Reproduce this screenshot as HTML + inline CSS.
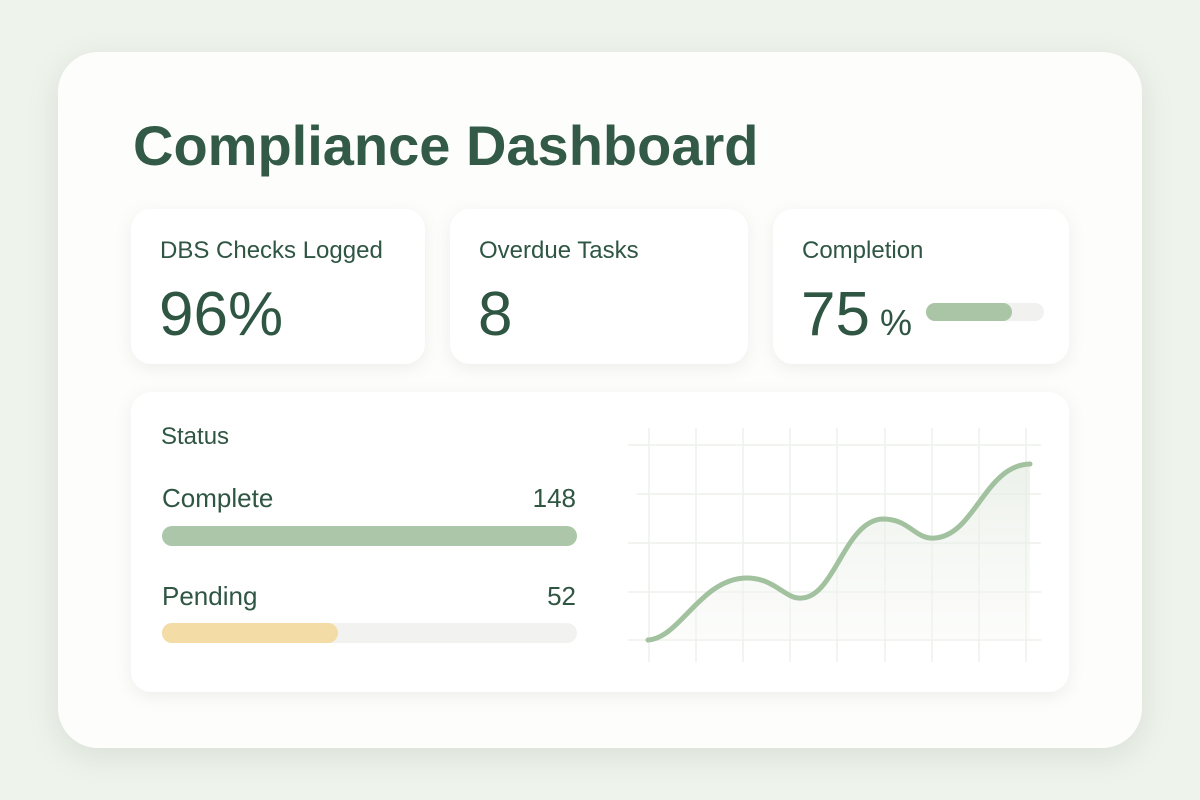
<!DOCTYPE html>
<html><head><style>
body{margin:0;width:1200px;height:800px;background:#eef3ec;font-family:"Liberation Sans",sans-serif;color:#2f5543;position:relative;overflow:hidden}
.outer{position:absolute;left:58px;top:52px;width:1084px;height:696px;background:#fdfdfc;border-radius:40px;box-shadow:0 8px 30px rgba(120,140,110,.18)}
.card{position:absolute;background:#fff;border-radius:20px;box-shadow:0 4px 16px rgba(100,120,100,.10)}
h1{position:absolute;left:133px;top:113px;margin:0;font-size:56px;font-weight:bold;color:#325a47;letter-spacing:0px}
.lbl{position:absolute;left:29px;top:28px;font-size:24px}
.big{position:absolute;left:28px;top:70px;font-size:62px}
</style></head><body>
<div class="outer"></div>
<h1>Compliance Dashboard</h1>
<div class="card" style="left:131px;top:209px;width:294px;height:155px"><div class="lbl">DBS Checks Logged</div><div class="big">96%</div></div>
<div class="card" style="left:450px;top:209px;width:298px;height:155px"><div class="lbl">Overdue Tasks</div><div class="big">8</div></div>
<div class="card" style="left:773px;top:209px;width:296px;height:155px"><div class="lbl">Completion</div><div class="big">75<span style="font-size:36px"> %</span></div>
<div style="position:absolute;left:153px;top:94px;width:118px;height:18px;border-radius:9px;background:#f1f2ef"><div style="width:86px;height:18px;border-radius:9px;background:#a9c5a5"></div></div></div>
<div class="card" style="left:131px;top:392px;width:938px;height:300px">
<div style="position:absolute;left:30px;top:31px;font-size:24px">Status</div>
<div style="position:absolute;left:31px;top:91px;font-size:26px">Complete</div>
<div style="position:absolute;right:493px;top:91px;font-size:26px">148</div>
<div style="position:absolute;left:31px;top:134px;width:415px;height:20px;border-radius:10px;background:#abc6a8"></div>
<div style="position:absolute;left:31px;top:189px;font-size:26px">Pending</div>
<div style="position:absolute;right:493px;top:189px;font-size:26px">52</div>
<div style="position:absolute;left:31px;top:231px;width:415px;height:20px;border-radius:10px;background:#f2f3f0"><div style="width:176px;height:20px;border-radius:10px;background:#f3dca6"></div></div>
</div>
<svg style="position:absolute;left:0;top:0" width="1200" height="800">
<defs><linearGradient id="g" x1="0" y1="0" x2="0" y2="1"><stop offset="0" stop-color="#e4ebe1" stop-opacity=".7"/><stop offset="1" stop-color="#f4f6f2" stop-opacity=".3"/></linearGradient></defs>
<g stroke="#eef1ec" stroke-width="1.5">
<line x1="649" y1="428" x2="649" y2="662"/><line x1="696" y1="428" x2="696" y2="662"/><line x1="743" y1="428" x2="743" y2="662"/><line x1="790" y1="428" x2="790" y2="662"/><line x1="837" y1="428" x2="837" y2="662"/><line x1="885" y1="428" x2="885" y2="662"/><line x1="932" y1="428" x2="932" y2="662"/><line x1="979" y1="428" x2="979" y2="662"/><line x1="1026" y1="428" x2="1026" y2="662"/>
<line x1="628" y1="445" x2="1041" y2="445"/><line x1="637" y1="494" x2="1041" y2="494"/><line x1="628" y1="543" x2="1041" y2="543"/><line x1="628" y1="592" x2="1041" y2="592"/><line x1="628" y1="640" x2="1041" y2="640"/>
</g>
<path d="M648 640 C680 638 700 580 745 578 C775 577 785 600 802 598 C835 596 845 520 883 519 C910 519 915 540 935 538 C975 535 985 465 1030 464 L1030 640 Z" fill="url(#g)"/>
<path d="M648 640 C680 638 700 580 745 578 C775 577 785 600 802 598 C835 596 845 520 883 519 C910 519 915 540 935 538 C975 535 985 465 1030 464" fill="none" stroke="#a2c19f" stroke-width="5" stroke-linecap="round"/>
</svg>
</body></html>
